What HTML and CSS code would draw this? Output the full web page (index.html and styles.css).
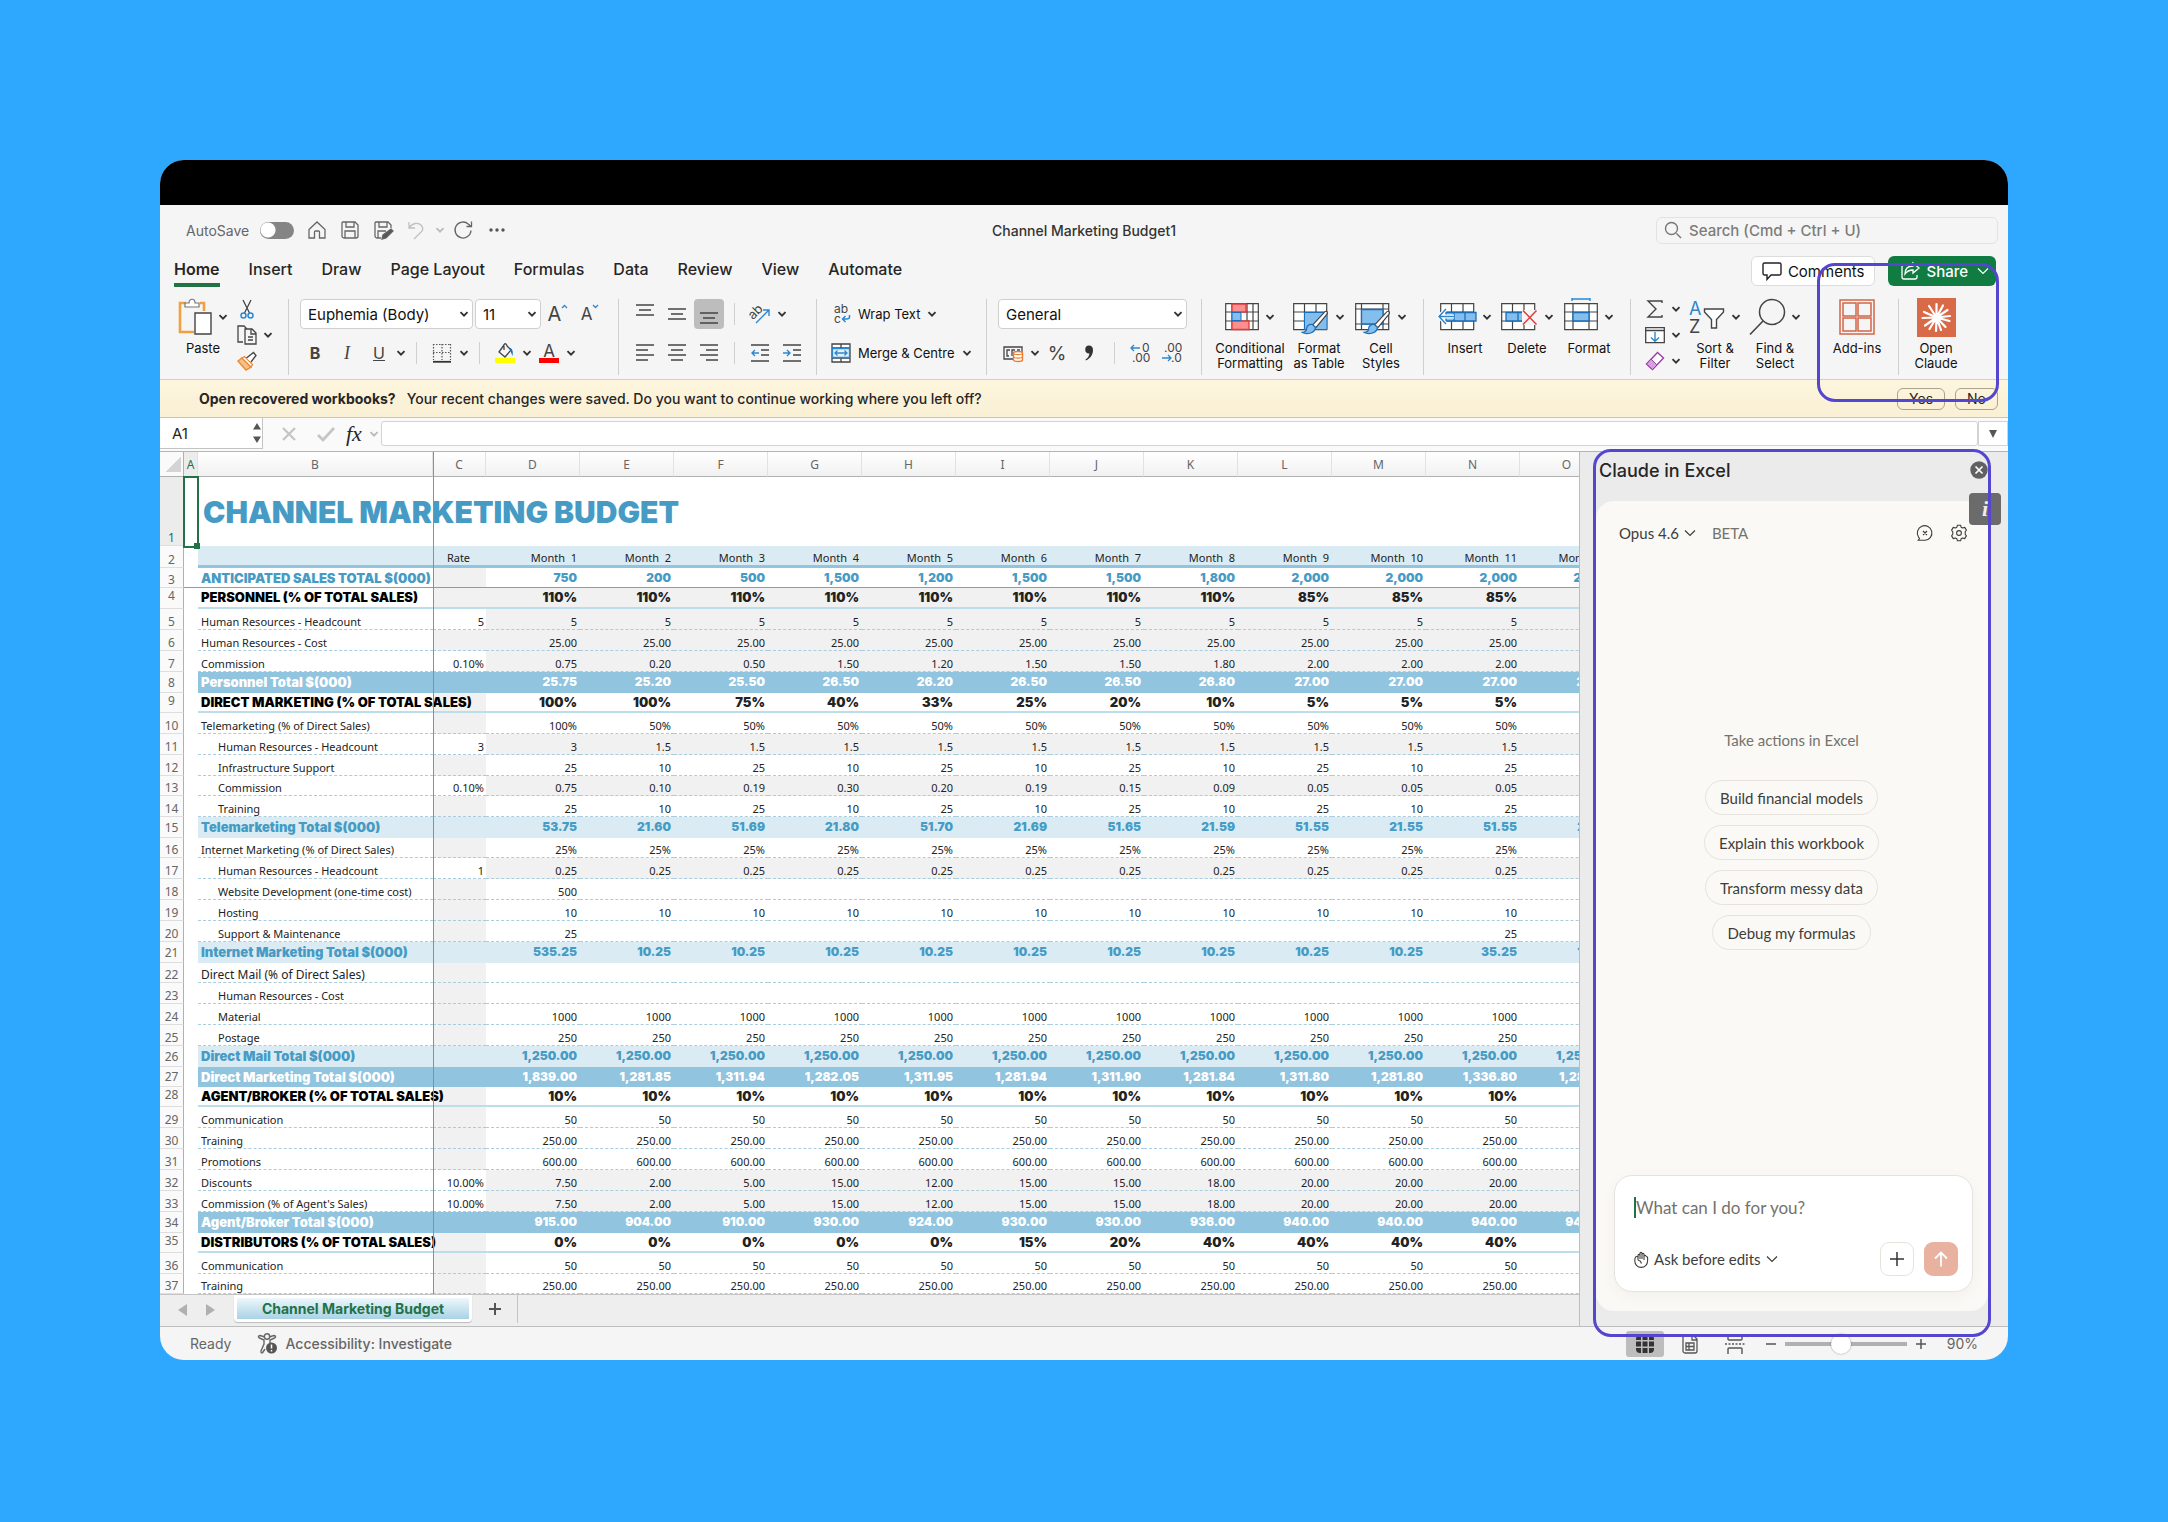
FILE: index.html
```html
<!DOCTYPE html>
<html lang="en">
<head>
<meta charset="utf-8">
<meta name="viewport" content="width=device-width, initial-scale=1">
<title>Channel Marketing Budget1</title>
<link rel="stylesheet" href="styles.css">
</head>
<body>
<svg class="defs" aria-hidden="true">
  <symbol id="chev" viewBox="0 0 10 10"><path d="M1.5 3.2 5 6.7l3.500-3.500" fill="none" stroke="currentColor" stroke-width="1.900"/></symbol>
  <symbol id="thin" viewBox="0 0 12 10"><path d="M1 2.500 6 7.500l5-5" fill="none" stroke="currentColor" stroke-width="1.200"/></symbol>
  <symbol id="brush" viewBox="0 0 30 28"><path d="M27.500 1.500c1.600.8.6 2.600 0 3.500L16 19l-3.500-3L24.500 3c.8-1 2-2 3-1.500z" fill="#fff" stroke="#444" stroke-width="1.300"/><path d="M12 15.500c-4-.5-6 2-6 4.500s-2 4-5 4c4 2.500 13.500 2 14.500-5z" fill="#83beec" stroke="#1b6fb8" stroke-width="1.300"/></symbol>
</svg>
<main class="window">
  <div class="blackbar"></div>

  <header class="titlebar">
    <div class="quick">
      <label class="autosave">AutoSave <input type="checkbox" class="switch"></label>
      <button class="ico" aria-label="Home"><svg width="20" height="20" viewBox="0 0 20 20"><path d="M2 9.500 10 2l8 7.500V18h-5.500v-6a1 1 0 0 0-1-1h-3a1 1 0 0 0-1 1v6H2z"/></svg></button>
      <button class="ico" aria-label="Save"><svg width="20" height="20" viewBox="0 0 20 20"><path d="M3 2h12l3 3v11a2 2 0 0 1-2 2H4a2 2 0 0 1-2-2V3a1 1 0 0 1 1-1zM6 2v5h8V2M5 18v-7h10v7"/></svg></button>
      <button class="ico" aria-label="Save a copy"><svg width="20" height="20" viewBox="0 0 20 20"><path d="M8 18H4a2 2 0 0 1-2-2V3a1 1 0 0 1 1-1h12l3 3v3M6 2v5h8V2M5 18v-7h8"/><path d="m9 19 1-4 8-6 2 2-7 7z" fill="#555"/></svg></button>
      <button class="ico dim" aria-label="Undo"><svg width="20" height="20" viewBox="0 0 20 20"><path d="M3 2v6h6M3 8c3-5 9-6 12-3s2 6-1 8l-6 6"/></svg></button>
      <svg class="chev dim" width="10" height="10"><use href="#chev"/></svg>
      <button class="ico" aria-label="Redo"><svg width="20" height="20" viewBox="0 0 20 20"><path d="M17 10.500a8 8 0 1 1-2.500-6.300L17 6.500M17.500 1.500v5h-5"/></svg></button>
      <button class="ico" aria-label="More"><svg width="20" height="20" viewBox="0 0 20 20"><g fill="#555" stroke="none"><circle cx="4" cy="10" r="1.700"/><circle cx="10" cy="10" r="1.700"/><circle cx="16" cy="10" r="1.700"/></g></svg></button>
    </div>
    <h1 class="doc">Channel Marketing Budget1</h1>
    <label class="search"><svg width="18" height="18" viewBox="0 0 18 18"><path d="M12.500 12.500 17 17" /><circle cx="7.500" cy="7.500" r="6"/></svg><input type="search" aria-label="Search" placeholder="Search (Cmd + Ctrl + U)"></label>
  </header>

  <div class="tabrow">
    <nav class="tabs">
      <a href="#home" class="active">Home</a><a href="#insert">Insert</a><a href="#draw">Draw</a><a href="#layout">Page Layout</a><a href="#formulas">Formulas</a><a href="#data">Data</a><a href="#review">Review</a><a href="#view">View</a><a href="#automate">Automate</a>
    </nav>
    <button class="comments"><svg width="20" height="20" viewBox="0 0 20 20"><path d="M2.500 2h15a1.500 1.500 0 0 1 1.500 1.500v9a1.500 1.500 0 0 1-1.500 1.500H9l-4 4.500V14H2.500A1.500 1.500 0 0 1 1 12.500v-9A1.500 1.500 0 0 1 2.500 2z" fill="none" stroke="#222" stroke-width="1.400"/></svg>Comments</button>
    <button class="share"><svg width="20" height="20" viewBox="0 0 20 20"><path d="M9 4H4a2 2 0 0 0-2 2v10a2 2 0 0 0 2 2h11a2 2 0 0 0 2-2v-2M13 2l6 5-6 5V9c-4 0-6 1-8 4 0-5 3-8 8-8z" fill="none" stroke="#fff" stroke-width="1.300"/></svg>Share<svg width="12" height="10"><use href="#thin"/></svg></button>
  </div>

  <section class="ribbon">
    <div class="group g-clip">
      <button class="big"><span class="pic"><svg width="34" height="38" viewBox="0 0 34 38"><path d="M8 5H2v29h14M22 5h4v8" fill="none" stroke="#f0a040" stroke-width="2.600"/><path d="M7 9V5h4c0-5 6-5 6 0h4v4z" fill="#fff" stroke="#777" stroke-width="1.200"/><path d="M17 15h16v21H17z" fill="#fff" stroke="#444" stroke-width="1.400"/></svg><svg class="chev" width="10" height="10"><use href="#chev"/></svg></span>Paste</button>
      <div class="mini">
        <div><button class="sm" aria-label="Cut"><svg width="20" height="20" viewBox="0 0 20 20"><path d="M6 1l6.500 13M14 1 7.500 14" stroke="#444" stroke-width="1.300"/><g fill="none" stroke="#2b88d0" stroke-width="1.500"><circle cx="6.500" cy="16.500" r="2.500"/><circle cx="13.500" cy="16.500" r="2.500"/></g></svg></button></div>
        <div><button class="sm" aria-label="Copy"><svg width="20" height="20" viewBox="0 0 20 20"><path d="M6 17H1V1h6l3 3M8 4h7l4 4v11H8zM14 4v5h5M11 12h5M11 15h5" fill="none" stroke="#444" stroke-width="1.300"/></svg></button><svg class="chev" width="10" height="10"><use href="#chev"/></svg></div>
        <div><button class="sm" aria-label="Format painter"><svg width="20" height="20" viewBox="0 0 20 20"><path d="m1 10 8 9 5-3-9-9z" fill="#f7c08a" stroke="#ec8a33" stroke-width="1.400"/><path d="m5 7 2.500-1.500 8 8L14 16z" fill="#fff" stroke="#ec8a33" stroke-width="1.300"/><path d="m9.500 7 7-5.500 2.500 3-5 6.500" fill="#fff" stroke="#444" stroke-width="1.300"/></svg></button></div>
      </div>
    </div>

    <div class="group g-font">
      <div class="row">
        <span class="sel font"><select aria-label="Font"><option>Euphemia (Body)</option></select><svg class="chev" width="10" height="10"><use href="#chev"/></svg></span>
        <span class="sel size"><select aria-label="Font size"><option>11</option></select><svg class="chev" width="10" height="10"><use href="#chev"/></svg></span>
        <button class="tool" aria-label="Grow font"><span class="bigA">A</span><svg class="up" width="7" height="14" viewBox="0 0 7 14"><path d="m1 4 2.500-2.500L6 4" fill="none" stroke="#2b88d0" stroke-width="1.300"/></svg></button>
        <button class="tool" aria-label="Shrink font"><span class="smA">A</span><svg class="up" width="7" height="14" viewBox="0 0 7 14"><path d="m1 1 2.500 2.500L6 1" fill="none" stroke="#2b88d0" stroke-width="1.300"/></svg></button>
      </div>
      <div class="row">
        <button class="tool b">B</button><button class="tool i">I</button><button class="tool u">U</button><svg class="chev" width="10" height="10"><use href="#chev"/></svg>
        <i class="sep"></i>
        <button class="tool" aria-label="Borders"><svg width="20" height="20" viewBox="0 0 20 20"><path d="M1.500 1v16M18.500 1v16M1 1.500h18M10 1v16M1 9.500h18" stroke="#555" stroke-width="1.200" stroke-dasharray="1.500 1.500"/><path d="M1 18.800h18" stroke="#333" stroke-width="1.800"/></svg></button><svg class="chev" width="10" height="10"><use href="#chev"/></svg>
        <i class="sep"></i>
        <button class="tool" aria-label="Fill colour"><svg width="20" height="20" viewBox="0 0 20 20"><path d="m9 2-5 7 6 5 6-7-4-4c-1-4-4-2-3 1v3" fill="none" stroke="#444" stroke-width="1.300"/><path d="M15 5c3 1 3 4 2.500 8L15 7z" fill="#1b6fb8"/><path d="M0 15h20v5H0z" fill="#ff0"/></svg></button><svg class="chev" width="10" height="10"><use href="#chev"/></svg>
        <button class="tool fc" aria-label="Font colour"><span>A</span></button><svg class="chev" width="10" height="10"><use href="#chev"/></svg>
      </div>
    </div>

    <div class="group g-align">
      <div class="row">
        <button class="tool" aria-label="Top align"><svg width="18" height="20" viewBox="0 0 18 20"><path d="M0 1h18M3 6h12M0 11h18"/></svg></button>
        <button class="tool" aria-label="Middle align"><svg width="18" height="20" viewBox="0 0 18 20"><path d="M0 5h18M3 10h12M0 15h18"/></svg></button>
        <button class="tool on" aria-label="Bottom align"><svg width="18" height="20" viewBox="0 0 18 20"><path d="M0 9h18M3 14h12M0 19h18"/></svg></button>
        <i class="sep"></i>
        <button class="tool" aria-label="Orientation"><svg width="20" height="20" viewBox="0 0 20 20"><text x="-1" y="13" transform="rotate(-45 5 10)" font-size="13" fill="#444" stroke="none">ab</text><path d="m6 19 13-13M13 6h6v6" fill="none" class="blue"/></svg></button><svg class="chev" width="10" height="10"><use href="#chev"/></svg>
      </div>
      <div class="row">
        <button class="tool" aria-label="Align left"><svg width="18" height="20" viewBox="0 0 18 20"><path d="M0 2h18M0 7h12M0 12h18M0 17h12"/></svg></button>
        <button class="tool" aria-label="Centre"><svg width="18" height="20" viewBox="0 0 18 20"><path d="M0 2h18M3 7h12M0 12h18M3 17h12"/></svg></button>
        <button class="tool" aria-label="Align right"><svg width="18" height="20" viewBox="0 0 18 20"><path d="M0 2h18M6 7h12M0 12h18M6 17h12"/></svg></button>
        <i class="sep"></i>
        <button class="tool" aria-label="Decrease indent"><svg width="18" height="20" viewBox="0 0 18 20"><path d="M0 2h18M10 7h8M10 12h8M0 18h18"/><path d="M8 10H1M4 7l-3 3 3 3" fill="none" class="blue"/></svg></button>
        <button class="tool" aria-label="Increase indent"><svg width="18" height="20" viewBox="0 0 18 20"><path d="M0 2h18M10 7h8M10 12h8M0 18h18"/><path d="M0 10h7M4 7l3 3-3 3" fill="none" class="blue"/></svg></button>
      </div>
    </div>

    <div class="group g-wrap">
      <div class="row"><button class="txt"><svg width="20" height="20" viewBox="0 0 20 20"><text x="3" y="9" font-size="12" fill="#444">ab</text><text x="3" y="19" font-size="12" fill="#444">c</text><path d="M18.500 11v2c0 2-2 2-3 2H12M14.500 12l-3 3 3 3" fill="none" stroke="#2b88d0" stroke-width="1.500"/></svg>Wrap Text<svg class="chev" width="10" height="10"><use href="#chev"/></svg></button></div>
      <div class="row"><button class="txt"><svg width="20" height="20" viewBox="0 0 20 20"><path d="M1 1h18v18H1zM1 5h18M1 15h18M10 1v4M10 15v4" fill="#fff" stroke="#444" stroke-width="1.300"/><path d="M1.500 5.500h17v9h-17z" fill="#e4f1fb" stroke="#2b88d0" stroke-width="1.300"/><path d="M4 10h12M6.500 7.500 4 10l2.500 2.500M13.500 7.500 16 10l-2.500 2.500" fill="none" stroke="#2b88d0" stroke-width="1.300"/></svg>Merge &amp; Centre<svg class="chev" width="10" height="10"><use href="#chev"/></svg></button></div>
    </div>

    <div class="group g-num">
      <div class="row"><span class="sel num"><select aria-label="Number format"><option>General</option></select><svg class="chev" width="10" height="10"><use href="#chev"/></svg></span></div>
      <div class="row">
        <button class="tool" aria-label="Currency"><svg width="20" height="20" viewBox="0 0 20 20"><path d="M1 4h18v12H1zM7 7H4v6h2M12 7H9v6M14 7h3" fill="none" stroke="#444" stroke-width="1.300"/><path d="M10.500 10c0-2 9-2 9 0v7c0 2-9 2-9 0z" fill="#fff" stroke="#ec7c30" stroke-width="1.400"/><path d="M10.500 10.500c1 1.500 8 1.500 9 0M10.500 14c1 1.500 8 1.500 9 0" fill="none" stroke="#ec7c30" stroke-width="1.300"/></svg></button><svg class="chev" width="10" height="10"><use href="#chev"/></svg>
        <button class="tool pct">%</button>
        <button class="tool" aria-label="Comma style"><svg width="10" height="16" viewBox="0 0 10 16"><path d="M5 .500A4 4 0 1 0 5.500 8.500C5 11 4 13 1.500 14.500l.5 1C7 13 9 9 9 5c0-3-1.500-4.500-4-4.500z" fill="#333"/></svg></button>
        <i class="sep"></i>
        <button class="tool" aria-label="Increase decimal"><svg width="20" height="20" viewBox="0 0 20 20"><text x="12" y="9" font-size="12" fill="#444">0</text><text x="2" y="19" font-size="12" fill="#444">.00</text><path d="M10 5H1M4 2 1 5l3 3" fill="none" stroke="#2b88d0" stroke-width="1.300"/></svg></button>
        <button class="tool" aria-label="Decrease decimal"><svg width="20" height="20" viewBox="0 0 20 20"><text x="2" y="9" font-size="12" fill="#444">.00</text><text x="9" y="19" font-size="12" fill="#444">.0</text><path d="M0 15h9M6 12l3 3-3 3" fill="none" stroke="#2b88d0" stroke-width="1.300"/></svg></button>
      </div>
    </div>

    <div class="group g-style">
      <button class="big wide"><span class="pic"><svg width="34" height="38" viewBox="0 0 34 38"><path d="M.700 5.700h32.600v26H.700zM0 14h34M0 23h34M7 5v27M22 5v27M28 5v27" fill="#fff" stroke="#444" stroke-width="1.200"/><path d="M7 6h14v8H7zM7 23h17v8.500H7z" fill="#ff8f8f" stroke="#dd3b3b" stroke-width="1.300"/><path d="M7 14.500h9v8H7z" fill="#83beec" stroke="#1b6fb8"/></svg><svg class="chev" width="10" height="10"><use href="#chev"/></svg></span>Conditional<br>Formatting</button>
      <button class="big"><span class="pic"><svg width="36" height="38" viewBox="0 0 36 38"><path d="M.700 5.700h33v26h-33zM0 14h34M0 23h34M11.500 5v27M23 5v27" fill="#fff" stroke="#444" stroke-width="1.200"/><path d="M11.500 14.500H34v17H11.500z" fill="#83beec" stroke="#1b6fb8"/><use href="#brush" x="8" y="12" width="28" height="26"/></svg><svg class="chev" width="10" height="10"><use href="#chev"/></svg></span>Format<br>as Table</button>
      <button class="big"><span class="pic"><svg width="36" height="38" viewBox="0 0 36 38"><path d="M.700 5.700h33v26h-33zM0 11h34M0 26h34M6.500 5v27M28 5v27" fill="#fff" stroke="#444" stroke-width="1.200"/><path d="M6.500 11.500H28v14.500H6.500z" fill="#83beec" stroke="#1b6fb8" stroke-width="1.300"/><use href="#brush" x="8" y="12" width="28" height="26"/></svg><svg class="chev" width="10" height="10"><use href="#chev"/></svg></span>Cell<br>Styles</button>
    </div>

    <div class="group g-cells">
      <button class="big"><span class="pic"><svg width="38" height="38" viewBox="0 0 38 38"><path d="M2.700 5.700h33v26h-33zM2 14h34M2 23h34M13.500 5v27M25 5v27" fill="#fff" stroke="#444" stroke-width="1.200"/><path d="M8 14.500h30v8.500H8zM27 14v9M16 14v9" fill="#83beec" stroke="#1b6fb8" stroke-width="1.300"/><path d="M16 18.500H1M8 11l-7 7.500L8 26" fill="none" stroke="#fff" stroke-width="4"/><path d="M16 18.500H1M8 11l-7 7.500L8 26" fill="none" stroke="#2b88d0" stroke-width="1.500"/></svg><svg class="chev" width="10" height="10"><use href="#chev"/></svg></span>Insert</button>
      <button class="big"><span class="pic"><svg width="38" height="38" viewBox="0 0 38 38"><path d="M1.700 5.700h33v26h-33zM1 14h34M1 23h34M12.500 5v27M24 5v27" fill="#fff" stroke="#444" stroke-width="1.200"/><path d="M6 14.500h18l3 4-3 4.500H6zM18 14v9" fill="#83beec" stroke="#1b6fb8" stroke-width="1.300"/><path d="M22 12h15v15H22z" fill="#f5f5f5"/><path d="m23 12.500 13.500 14M36.500 12.500 23 26.500" stroke="#dd3b3b" stroke-width="1.500"/></svg><svg class="chev" width="10" height="10"><use href="#chev"/></svg></span>Delete</button>
      <button class="big"><span class="pic"><svg width="34" height="38" viewBox="0 0 34 38"><path d="M.700 5.700h32.600v26H.700zM0 14h34M0 23h34M9 5v27M25 5v27" fill="#fff" stroke="#444" stroke-width="1.200"/><path d="M9 14.500h16v8.500H9z" fill="#83beec" stroke="#1b6fb8" stroke-width="1.300"/><path d="M8 1h18M8 0v3M26 0v3" stroke="#2b88d0" stroke-width="1.400"/></svg><svg class="chev" width="10" height="10"><use href="#chev"/></svg></span>Format</button>
    </div>

    <div class="group g-edit">
      <div class="mini">
        <div><button class="sm" aria-label="AutoSum"><svg width="20" height="20" viewBox="0 0 20 20"><path d="M17 4V2H3l8 8-8 8h14v-2" fill="none" stroke="#444" stroke-width="1.400"/></svg></button><svg class="chev" width="10" height="10"><use href="#chev"/></svg></div>
        <div><button class="sm" aria-label="Fill"><svg width="20" height="20" viewBox="0 0 20 20"><path d="M.700 2.700h18.600v15H.700zM0 5.500h20" fill="#fff" stroke="#444" stroke-width="1.300"/><path d="M10 7v9M6 12.500l4 3.800 4-3.800" fill="none" stroke="#2b88d0" stroke-width="1.400"/></svg></button><svg class="chev" width="10" height="10"><use href="#chev"/></svg></div>
        <div><button class="sm" aria-label="Clear"><svg width="20" height="20" viewBox="0 0 20 20"><path d="M1.500 13 12.500 1.500l6 5.500L7.500 18.500z" fill="#fff" stroke="#9a3fa8" stroke-width="1.400"/><path d="m1.500 13 4.500-5 6 6-4.500 4.500z" fill="#d9a0e0" stroke="#9a3fa8"/></svg></button><svg class="chev" width="10" height="10"><use href="#chev"/></svg></div>
      </div>
      <button class="big"><span class="pic"><svg width="36" height="38" viewBox="0 0 36 38"><text x="0" y="17" font-size="18" fill="#2b88d0">A</text><text x="0" y="35" font-size="18" fill="#444">Z</text><path d="M15.500 11h19v3l-7 7.500V30h-5v-8.500l-7-7.500z" fill="#fff" stroke="#444" stroke-width="1.400"/></svg><svg class="chev" width="10" height="10"><use href="#chev"/></svg></span>Sort &amp;<br>Filter</button>
      <button class="big"><span class="pic"><svg width="36" height="38" viewBox="0 0 36 38"><circle cx="23" cy="14" r="12.500" fill="none" stroke="#444" stroke-width="1.500"/><path d="M14 23 1 36.500" stroke="#444" stroke-width="1.600"/></svg><svg class="chev" width="10" height="10"><use href="#chev"/></svg></span>Find &amp;<br>Select</button>
      <button class="big addins"><span class="pic"><svg width="36" height="38" viewBox="0 0 36 38"><g fill="none" stroke="#d4654a" stroke-width="1.500"><path d="M1 2h34v34H1z"/><path d="M4 5h13v13H4zM19 5h13v13H19zM4 20h13v13H4zM19 20h13v13H19z"/></g></svg></span>Add-ins</button>
    </div>

    <div class="group g-claude">
      <button class="big"><span class="pic"><svg width="39" height="39" viewBox="0 0 39 39"><path d="M0 0h39v39H0z" fill="#d96a47"/><path d="M19.500 19.500V6M19.500 19.500 26 7.500M19.500 19.500l11-7.500M19.500 19.500 33 18M19.500 19.500 32.500 23M19.500 19.500l9 9.500M19.500 19.500 24 32M19.500 19.500 19 33M19.500 19.500 12.500 31M19.500 19.500 8 27.500M19.500 19.500 5.500 20M19.500 19.500 7 14M19.500 19.500 12 8" stroke="#fff" stroke-width="2.200" stroke-linecap="round"/></svg></span>Open<br>Claude</button>
    </div>
  </section>

  <div class="notice">
    <p><strong>Open recovered workbooks?</strong>Your recent changes were saved. Do you want to continue working where you left off?</p>
    <button>Yes</button><button>No</button>
  </div>

  <div class="formula">
    <div class="namebox"><input type="text" aria-label="Name box" value="A1"><svg width="8" height="20" viewBox="0 0 8 20"><path d="M0 6.500 4 0l4 6.500zM0 13.500 4 20l4-6.500z" fill="#555"/></svg></div>
    <svg class="fx-x" width="16" height="16" viewBox="0 0 16 16"><path d="m2 2 12 12M14 2 2 14" stroke="#c6c6c6" stroke-width="2.400"/></svg>
    <svg class="fx-c" width="18" height="16" viewBox="0 0 18 16"><path d="m1 9 5 5L17 2" fill="none" stroke="#c6c6c6" stroke-width="2.800"/></svg>
    <span class="fx">fx</span>
    <svg class="chev dim" width="10" height="10"><use href="#chev"/></svg>
    <input class="fbox" type="text" aria-label="Formula bar">
    <button class="drop" aria-label="Expand formula bar"><svg width="10" height="8" viewBox="0 0 10 8"><path d="M1 0h8L5 8z" fill="#555"/></svg></button>
  </div>

  <div class="workspace">
    <div class="book">
      <div class="grid">
        <table class="sheet"><colgroup><col class="c-n"><col class="c-a"><col class="c-b"><col class="c-c"></colgroup><thead></thead><tbody></tbody></table>
        <span class="freeze"></span><span class="cursor"></span>
      </div>
      <div class="sheets">
        <button class="nav" aria-label="Previous sheet"><svg width="10" height="12" viewBox="0 0 10 12"><path d="M9 0v12L0 6z" fill="#b0b0b0"/></svg></button>
        <button class="nav" aria-label="Next sheet"><svg width="10" height="12" viewBox="0 0 10 12"><path d="M1 0v12l9-6z" fill="#b0b0b0"/></svg></button>
        <button class="sheettab"><span>Channel Marketing Budget</span></button>
        <button class="add" aria-label="Add sheet"><svg width="12" height="12" viewBox="0 0 12 12"><path d="M6 0v12M0 6h12" stroke="#555" stroke-width="2"/></svg></button>
      </div>
    </div>

    <aside class="pane">
      <div class="panehead"><h2>Claude in Excel</h2><button aria-label="Close pane"><svg width="18" height="18" viewBox="0 0 18 18"><circle cx="9" cy="9" r="8.700" fill="#616161"/><path d="m5.500 5.500 7 7M12.500 5.500l-7 7" stroke="#fff" stroke-width="1.700"/></svg></button></div>
      <div class="card">
        <div class="cardhead">
          <button class="model">Opus 4.6<svg width="12" height="10"><use href="#thin"/></svg></button><span class="beta">BETA</span>
          <button aria-label="New chat"><svg width="18" height="18" viewBox="0 0 18 18"><path d="M2.500 13A7.300 7.300 0 1 1 9 16.300H2.200L3.500 14.500zM7 7l4 4M11 7l-4 4" fill="none" stroke="#3d3d3a" stroke-width="1.100"/></svg></button>
          <button aria-label="Settings"><svg width="18" height="18" viewBox="0 0 18 18"><path d="M7.400 1.200h3.200l.5 2 1.500.8 2.100-.6 1.700 2.700-1.200 1.700v2.400l1.200 1.700-1.700 2.700-2.100-.6-1.500.8-.5 2H7.400l-.5-2-1.500-.8-2.100.6-1.700-2.700 1.200-1.700V7.800L1.600 6.100l1.700-2.700 2.100.6 1.500-.8z" fill="none" stroke="#3d3d3a" stroke-width="1.100" stroke-linejoin="round"/><circle cx="9" cy="9" r="2.400" fill="none" stroke="#3d3d3a" stroke-width="1.100"/></svg></button>
        </div>
        <div class="prompts">
          <p>Take actions in Excel</p>
          <button>Build financial models</button>
          <button>Explain this workbook</button>
          <button>Transform messy data</button>
          <button>Debug my formulas</button>
        </div>
        <form class="chat">
          <div class="ask"><i class="caret"></i><input type="text" aria-label="Message" placeholder="What can I do for you?"></div>
          <div class="chatrow">
            <button type="button" class="mode"><svg width="15" height="17" viewBox="0 0 15 17"><path d="M4 9V4.500c0-1.500 2-1.500 2 0V8 2.500c0-1.500 2-1.500 2 0V8 3.500c0-1.500 2-1.500 2 0V9 5.500c0-1.500 2-1.500 2 0M4 6C1.500 4.500.8 7 .8 10a6.300 6.300 0 0 0 12.800 0c0-3 .5-4.500-1.600-4.500M4 9c2 .5 3 1.500 3.500 3.500" fill="none" stroke="#3d3d3a" stroke-width="1.100"/></svg>Ask before edits<svg width="12" height="10"><use href="#thin"/></svg></button>
            <button type="button" class="plus" aria-label="Attach"><svg width="14" height="14" viewBox="0 0 14 14"><path d="M7 0v14M0 7h14" stroke="#333" stroke-width="1.500"/></svg></button>
            <button type="button" class="send" aria-label="Send"><svg width="14" height="16" viewBox="0 0 14 16"><path d="M7 15.500V1.500M1 7.500l6-6 6 6" fill="none" stroke="#fff" stroke-width="1.800"/></svg></button>
          </div>
        </form>
      </div>
      <button class="info" aria-label="Info">i</button>
    </aside>
  </div>

  <footer class="status">
    <span>Ready</span>
    <button class="acc"><svg width="20" height="21" viewBox="0 0 20 21"><g fill="none" stroke="#666" stroke-width="1.400"><circle cx="9" cy="3.500" r="2.700"/><path d="M7 4 2 2.500C0 2.500 0 4.500 1.500 5L6 7v4l-3 7c-.5 2 1 2.500 2 1l2-3M11 4l5-1.500c2 0 2 2 .5 2.500L12 7v3"/></g><circle cx="13.500" cy="15" r="5.500" fill="#555"/><path d="M13.500 11.500v4M13.500 17v1.500" stroke="#fff" stroke-width="1.500"/></svg>Accessibility: Investigate</button>
    <div class="views">
      <button class="view on" aria-label="Normal view"><svg width="18" height="18" viewBox="0 0 18 18"><path d="M0 4a4 4 0 0 1 4-4h1v5H0zM6.500 0h5v5h-5zM13 0h1a4 4 0 0 1 4 4v1h-5zM0 6.500h5v5H0zM6.500 6.500h5v5h-5zM13 6.500h5v5h-5zM0 13h5v5H4a4 4 0 0 1-4-4zM6.500 13h5v5h-5zM13 13h5v1a4 4 0 0 1-4 4h-1z" fill="#333"/></svg></button>
      <button class="view" aria-label="Page layout view"><svg width="16" height="20" viewBox="0 0 16 20"><path d="M1 3a2 2 0 0 1 2-2h8l4 4v12a2 2 0 0 1-2 2H3a2 2 0 0 1-2-2zM10 1v5h5M4 9h8v7H4zM4 12.500h8M7 9v7" fill="none" stroke="#555" stroke-width="1.300"/></svg></button>
      <button class="view" aria-label="Page break view"><svg width="20" height="20" viewBox="0 0 20 20"><path d="M3 0v5a1 1 0 0 0 1 1h12a1 1 0 0 0 1-1V0M3 20v-5a1 1 0 0 1 1-1h12a1 1 0 0 1 1 1v5" fill="none" stroke="#555" stroke-width="1.400"/><path d="M0 10h20" stroke="#555" stroke-width="1.400" stroke-dasharray="2 1.500"/></svg></button>
    </div>
    <div class="zoom">
      <button aria-label="Zoom out"><svg width="10" height="10" viewBox="0 0 10 10"><path d="M0 5h10" stroke="#555" stroke-width="1.500"/></svg></button>
      <input type="range" aria-label="Zoom" min="0" max="100" value="45">
      <button aria-label="Zoom in"><svg width="10" height="10" viewBox="0 0 10 10"><path d="M0 5h10M5 0v10" stroke="#555" stroke-width="1.500"/></svg></button>
      <span>90%</span>
    </div>
  </footer>

  <div class="frame ribbonframe"></div>
  <div class="frame paneframe"></div>
</main>
<script src="sheet.js"></script>
</body>
</html>
```
FILE: sheet.js
```js
// Each row: kind | label | rate | twelve monthly values (a single value repeats across all months)
const same = (v) => Array(11).fill(v).concat('');
const list = (s) => { const a = s.split(' '); while (a.length < 12) a.push(''); return a; };
const none = Array(12).fill('');
const alt = ['25', ...'10 25 10 25 10 25 10 25 10 25'.split(' '), ''];
const rows = [
  ['title', 'CHANNEL MARKETING BUDGET', '', none],
  ['months', '', 'Rate', Array.from({ length: 12 }, (_, i) => 'Month\u00a0 ' + (i + 1))],
  ['sales', 'ANTICIPATED SALES TOTAL $(000)', '', list('750 200 500 1,500 1,200 1,500 1,500 1,800 2,000 2,000 2,000 2,000')],
  ['section shade', 'PERSONNEL (% OF TOTAL SALES)', '', list('110% 110% 110% 110% 110% 110% 110% 110% 85% 85% 85%')],
  ['item shade', 'Human Resources - Headcount', '5', same('5')],
  ['item shade', 'Human Resources - Cost', '', same('25.00')],
  ['item shade', 'Commission', '0.10%', list('0.75 0.20 0.50 1.50 1.20 1.50 1.50 1.80 2.00 2.00 2.00')],
  ['total', 'Personnel Total $(000)', '', list('25.75 25.20 25.50 26.50 26.20 26.50 26.50 26.80 27.00 27.00 27.00 27.00')],
  ['section short', 'DIRECT MARKETING (% OF TOTAL SALES)', '', list('100% 100% 75% 40% 33% 25% 20% 10% 5% 5% 5%')],
  ['item', 'Telemarketing (% of Direct Sales)', '', ['100%', ...same('50%').slice(1)]],
  ['item sub shade', 'Human Resources - Headcount', '3', ['3', ...same('1.5').slice(1)]],
  ['item sub', 'Infrastructure Support', '', alt],
  ['item sub shade short', 'Commission', '0.10%', list('0.75 0.10 0.19 0.30 0.20 0.19 0.15 0.09 0.05 0.05 0.05')],
  ['item sub', 'Training', '', alt],
  ['subtotal', 'Telemarketing Total $(000)', '', list('53.75 21.60 51.69 21.80 51.70 21.69 51.65 21.59 51.55 21.55 51.55 21.55')],
  ['item short', 'Internet Marketing (% of Direct Sales)', '', same('25%')],
  ['item sub shade', 'Human Resources - Headcount', '1', same('0.25')],
  ['item sub', 'Website Development (one-time cost)', '', ['500', ...none.slice(1)]],
  ['item sub', 'Hosting', '', same('10')],
  ['item sub', 'Support & Maintenance', '', ['25', ...Array(9).fill(''), '25', '']],
  ['subtotal', 'Internet Marketing Total $(000)', '', list('535.25 10.25 10.25 10.25 10.25 10.25 10.25 10.25 10.25 10.25 35.25 10.25')],
  ['item large short', 'Direct Mail (% of Direct Sales)', '', none],
  ['item sub', 'Human Resources - Cost', '', none],
  ['item sub', 'Material', '', same('1000')],
  ['item sub', 'Postage', '', same('250')],
  ['subtotal', 'Direct Mail Total $(000)', '', Array(12).fill('1,250.00')],
  ['total short', 'Direct Marketing Total $(000)', '', list('1,839.00 1,281.85 1,311.94 1,282.05 1,311.95 1,281.94 1,311.90 1,281.84 1,311.80 1,281.80 1,336.80 1,281.80')],
  ['section short', 'AGENT/BROKER (% OF TOTAL SALES)', '', same('10%')],
  ['item', 'Communication', '', same('50')],
  ['item', 'Training', '', same('250.00')],
  ['item', 'Promotions', '', same('600.00')],
  ['item shade', 'Discounts', '10.00%', list('7.50 2.00 5.00 15.00 12.00 15.00 15.00 18.00 20.00 20.00 20.00')],
  ['item shade', "Commission (% of Agent's Sales)", '10.00%', list('7.50 2.00 5.00 15.00 12.00 15.00 15.00 18.00 20.00 20.00 20.00')],
  ['total', 'Agent/Broker Total $(000)', '', list('915.00 904.00 910.00 930.00 924.00 930.00 930.00 936.00 940.00 940.00 940.00 940.00')],
  ['section short', 'DISTRIBUTORS (% OF TOTAL SALES)', '', list('0% 0% 0% 0% 0% 15% 20% 40% 40% 40% 40%')],
  ['item', 'Communication', '', same('50')],
  ['item short', 'Training', '', same('250.00')],
];

const add = (parent, tag, text, cls) => {
  const el = document.createElement(tag);
  if (text) el.textContent = text;
  if (cls) el.className = cls;
  parent.append(el);
  return el;
};

const table = document.querySelector('.sheet');
for (let i = 0; i < 12; i++) add(table.querySelector('colgroup'), 'col', '', 'c-m');

const head = add(table.tHead, 'tr');
add(head, 'th', '', 'corner');
[...'ABCDEFGHIJKLMNO'].forEach((c) => add(head, 'th', c, c === 'A' ? 'picked' : ''));

rows.forEach(([kind, label, rate, values], i) => {
  const tr = add(table.tBodies[0], 'tr', '', kind);
  add(tr, 'th', String(i + 1), i ? 'n' : 'n picked');
  add(tr, 'td');
  add(tr, 'td', label, 'label');
  add(tr, 'td', rate, rate ? 'rate' : 'rate empty');
  values.forEach((v) => add(tr, 'td', v, 'v'));
});
```
FILE: styles.css
```css
* { box-sizing: border-box; }
body {
  margin: 0;
  padding: 160px;
  background: #2ea8ff;
  font-family: Inter, "Liberation Sans", sans-serif;
  font-size: 14px;
  color: #262626;
}
button, input, select { font: inherit; color: inherit; margin: 0; }
button { border: 0; padding: 0; background: none; }
h1, h2, p { margin: 0; }
svg { display: block; flex: none; overflow: visible; }
.defs { position: absolute; width: 0; height: 0; }
.window {
  position: relative;
  background: #f5f5f5;
  border-radius: 24px;
  overflow: hidden;
}
.blackbar { height: 45px; background: #000; }
.chev { color: #333; }
.dim { color: #bbb; }

/* title bar */
.titlebar {
  display: grid;
  grid-template-columns: 1fr auto 1fr;
  align-items: center;
  height: 50px;
  padding: 0 10px;
}
.quick { display: flex; align-items: center; gap: 13px; padding-left: 16px; }
.autosave { display: flex; align-items: center; gap: 11px; color: #666; }
.switch {
  appearance: none;
  width: 34px;
  height: 17px;
  margin: 0;
  border-radius: 9px;
  background: radial-gradient(circle at 8px 8px, #fff 7px, transparent 8px), #858585;
}
.ico svg { fill: none; stroke: #666; stroke-width: 1.3; }
.ico.dim svg { stroke: #c0c0c0; }
.quick .chev { margin: 0 -4px; color: #bbb; }
.doc { font-size: 14px; font-weight: 500; color: #333; }
.search {
  justify-self: end;
  display: flex;
  align-items: center;
  gap: 5px;
  width: 342px;
  height: 27px;
  padding-left: 7px;
  border: 1px solid #e2e2e2;
  border-radius: 6px;
}
.search svg { fill: none; stroke: #777; stroke-width: 1.4; }
.search input { flex: 1; min-width: 0; border: 0; background: none; font-size: 15px; font-weight: 500; outline: 0; }
.search input::placeholder { color: #7c7c7c; }

/* tabs */
.tabrow { display: flex; height: 40px; padding: 1px 12px 0 14px; align-items: flex-start; }
.tabs { display: flex; gap: 29px; margin-right: auto; }
.tabs a { color: #262626; text-decoration: none; font-size: 16px; font-weight: 500; line-height: 27px; }
.tabs .active { font-weight: 600; border-bottom: 4px solid #217346; }
.comments, .share { display: flex; align-items: center; height: 30px; border-radius: 6px; font-size: 15px; }
.comments { gap: 6px; padding: 0 10px; margin-right: 13px; background: #fff; border: 1px solid #dcdcdc; color: #111; }
.share { gap: 6px; padding: 0 7px 0 12px; background: #107c41; color: #fff; font-weight: 500; }
.share svg:last-child { margin-left: 3px; }

/* ribbon */
.ribbon { display: flex; padding: 4px 0; border-bottom: 1px solid #cfcfcf; color: #111; }
.group { height: 76px; border-right: 1px solid #cfcfcf; }
.row { display: flex; align-items: center; gap: 2px; height: 30px; }
.row + .row { margin-top: 9px; }
.tool { display: flex; align-items: center; justify-content: center; width: 30px; height: 30px; border-radius: 4px; color: #444; font-size: 16px; }
.tool svg { stroke-width: 1.4; }
.sep { width: 1px; height: 22px; margin: 0 8px; background: #cfcfcf; }
.g-clip { display: flex; width: 129px; padding-left: 12px; }
.g-font { width: 330px; padding-left: 11px; }
.g-align { width: 198px; padding-left: 11px; }
.g-align .tool svg { stroke: #444; }
.g-align .chev { stroke: none; }
.tool .blue { stroke: #2b88d0; }
.g-wrap { width: 170px; padding-left: 14px; }
.g-num { width: 215px; padding-left: 11px; }
.g-style { display: flex; width: 222px; padding-left: 10px; }
.g-cells { display: flex; width: 207px; padding-left: 10px; }
.g-edit { display: flex; width: 268px; padding-left: 14px; }
.g-claude { display: flex; padding-left: 6px; border: 0; }
.sel { display: grid; height: 30px; align-items: center; }
.sel > * { grid-area: 1 / 1; }
.sel select { appearance: none; width: 100%; height: 30px; padding: 0 7px; border: 1px solid #cfcfcf; border-radius: 4px; background: #fff; font-size: 15px; color: #111; }
.sel .chev { justify-self: end; margin-right: 4px; pointer-events: none; }
.font { width: 173px; }
.size { width: 66px; }
.num { width: 189px; }
.bigA { font-size: 20px; line-height: 20px; }
.smA { font-size: 17px; line-height: 20px; }
.up { align-self: flex-start; margin-top: 5px; }
.b { font-weight: 700; }
.i { font: italic 18px "Liberation Serif", serif; }
.u { text-decoration: underline; }
.fc span { width: 20px; height: 20px; border-bottom: 5px solid #f00; font-size: 17px; line-height: 16px; }
.on { background: #bdbdbd; }
.pct { font-size: 19px; }
.txt { display: flex; align-items: center; gap: 7px; font-size: 13px; color: #111; }
.mini { display: flex; flex-direction: column; gap: 6px; width: 40px; }
.mini div { display: flex; align-items: center; gap: 6px; height: 20px; }
.g-clip .mini { margin-left: 3px; }
.big { display: flex; flex-direction: column; align-items: center; width: 62px; font-size: 13px; line-height: 15px; white-space: nowrap; text-align: center; color: #111; }
.big.wide { width: 76px; }
.pic { display: flex; align-items: center; gap: 6px; height: 38px; margin: -1px 0 5px; }
.g-edit .big { width: 60px; }
.g-edit .addins { margin-left: 22px; }

/* recovery notice */
.notice { display: flex; align-items: center; gap: 10px; height: 38px; padding: 0 10px 0 39px; background: linear-gradient(#fdf5dd, #f9f0d5); border-bottom: 1px solid #c9c5b5; font-size: 14px; font-weight: 500; }
.notice p { margin-right: auto; }
.notice strong { font-weight: 700; margin-right: 11px; }
.notice button { height: 22px; padding: 0 11px; border: 1px solid #a9a490; border-radius: 6px; line-height: 20px; font-weight: 400; }

/* formula bar */
.formula { display: flex; align-items: center; height: 34px; padding-bottom: 2px; background: #fafafa; border-bottom: 1px solid #b5b5b5; }
.namebox { display: flex; align-items: center; width: 103px; height: 31px; padding: 0 1px 0 12px; background: #fff; border-right: 1px solid #c4c4c4; border-bottom: 1px solid #c4c4c4; }
.namebox input { flex: 1; min-width: 0; padding: 0; border: 0; background: none; font-size: 15px; }
.fx-x { margin-left: 18px; }
.fx-c { margin-left: 20px; }
.fx { width: 22px; margin: 0 1px 0 11px; font: italic 22px "Liberation Serif", serif; line-height: 24px; }
.fbox { flex: 1; min-width: 0; height: 25px; margin-left: 2px; border: 1px solid #d3d3d3; border-radius: 3px; background: #fff; }
.drop { display: flex; align-items: center; justify-content: center; width: 30px; height: 25px; background: #fff; border: 1px solid #d3d3d3; }

/* sheet */
.workspace { display: flex; }
.book { flex: 1; min-width: 0; display: flex; flex-direction: column; }
.grid { position: relative; overflow: hidden; background: #fff; }
.sheet { table-layout: fixed; width: 1454px; border-spacing: 0; font: 11px "Noto Sans", sans-serif; color: #222; }
.c-n { width: 24px; }
.c-a { width: 14px; }
.c-b { width: 235px; }
.c-c { width: 53px; }
.c-m { width: 94px; }
.sheet th, .sheet td { padding: 0; white-space: nowrap; }
thead th { height: 25px; border-right: 1px solid #e2e2e2; border-bottom: 1px solid #b0b0b0; background: linear-gradient(#fff, #f1f1f1); font-weight: 400; font-size: 12px; color: #666; }
thead .corner { border-right-color: #b0b0b0; background: linear-gradient(135deg, transparent 50%, #d4d4d4 51%) 5px 4px / 16px 16px no-repeat, #fafafa; }
.sheet .picked { background: #ececec; color: #217346; }
tbody tr { height: 21px; }
tbody .short { height: 20px; }
.sheet .n { border-right: 1px solid #b0b0b0; border-bottom: 1px solid #dedede; background: #fafafa; font-weight: 400; font-size: 12px; line-height: 15px; color: #666; text-align: center; vertical-align: bottom; }
.sheet .n.picked { background: #ececec; color: #217346; }
.sheet .label { padding-left: 3px; }
.sheet .v { padding-right: 3px; text-align: right; }
.sheet .rate { padding-right: 2px; text-align: right; }
.empty { background: #f1f1f1; }
.item td { vertical-align: bottom; line-height: 14px; }
.item .label, .item .rate, .item .v { border-bottom: 1px dashed #a9cddf; }
.sheet .sub .label { padding-left: 20px; }
.large .label { font-size: 12px; }
.shade .v { background: #f1f1f1; }
tbody .title { height: 69px; }
.title .label { font: 900 30px Inter, sans-serif; color: #469bc5; }
.title .empty { background: none; }
.sheet .title .label { padding-left: 5px; }
tbody .months { height: 22px; }
.months td { vertical-align: bottom; line-height: 14px; }
.months .label, .months .rate, .months .v { background: #daebf3; border-bottom: 3px solid #90c4df; }
.sheet .months .rate { text-align: center; }
tbody .sales { height: 20px; }
.sales td { border-bottom: 1px solid #999; line-height: 18px; }
.sales .label, .sales .v { font-family: Inter, sans-serif; font-weight: 900; font-size: 12px; color: #469bc5; }
.section td { vertical-align: top; line-height: 18px; }
.section .label, .section .v { font-family: Inter, sans-serif; font-weight: 900; font-size: 13px; color: #000; }
.section .v { color: #222; }
.section .label, .section .rate, .section .v { border-bottom: 2px solid #bcdeea; }
.sheet .section .n { vertical-align: top; }
.sheet .total .n, .sheet .subtotal .n { vertical-align: middle; }
.total td, .subtotal td { line-height: 20px; vertical-align: top; font-family: Inter, sans-serif; font-weight: 900; font-size: 12px; }
.total .label, .total .rate, .total .v { background: #90c4df; color: #fff; }
.subtotal .label, .subtotal .rate, .subtotal .v { background: #daebf3; color: #469bc5; }
.sales .label, .total .label, .subtotal .label { font-size: 13px; }
.freeze { position: absolute; top: 0; bottom: 0; left: 273px; width: 1px; background: #8f8f8f; }
.cursor { position: absolute; top: 24px; left: 23px; width: 16px; height: 72px; border: 2px solid #217346; }
.cursor::after { content: ""; position: absolute; right: -3px; bottom: -3px; width: 6px; height: 6px; background: #217346; }

/* sheet tabs */
.sheets { display: flex; align-items: flex-start; flex: 1; min-height: 32px; padding-left: 18px; background: #eee; border-top: 1px solid #c4c4c4; }
.nav { width: 10px; height: 30px; margin-right: 17px; }
.sheettab { height: 27px; margin-left: 2px; padding: 3px; background: #fff; border-radius: 0 0 4px 4px; box-shadow: 0 1px 1px #bbb; }
.sheettab span { display: block; width: 232px; height: 21px; background: linear-gradient(#eef7fb, #a9d2e6); font-size: 14px; font-weight: 700; line-height: 22px; color: #217346; }
.add { display: flex; align-items: center; justify-content: center; width: 46px; height: 28px; border-right: 1px solid #c4c4c4; }

/* Claude pane */
.pane { position: relative; display: flex; flex-direction: column; width: 429px; padding: 0 20px 15px 16px; background: #ebebeb; border-left: 1px solid #bdbdbd; font-family: Lato, "Liberation Sans", sans-serif; }
.panehead { display: flex; align-items: center; justify-content: space-between; height: 49px; padding: 0 0 13px 3px; }
.panehead h2 { font: 500 18px Inter, sans-serif; }
.card { flex: 1; display: flex; flex-direction: column; padding: 22px 15px 19px 18px; background: #faf9f6; border-radius: 18px; color: #3d3d3a; }
.cardhead { display: flex; align-items: center; gap: 16px; height: 20px; padding: 0 5px; font-size: 15px; }
.model { display: flex; align-items: center; gap: 5px; }
.beta { margin-right: auto; color: #73726c; }
.prompts { display: flex; flex: 1; flex-direction: column; align-items: center; justify-content: center; gap: 10px; padding: 0 4px 38px 0; }
.prompts p { margin-bottom: 20px; font-size: 15px; line-height: 20px; color: #73726c; }
.prompts button { height: 35px; padding: 0 14px; border: 1px solid #e5e3dc; border-radius: 18px; font-size: 15px; }
.chat { height: 117px; padding: 20px 14px 14px 19px; background: #fff; border: 1px solid #e5e3dc; border-radius: 18px; box-shadow: 0 4px 16px #0000000a; }
.ask { display: flex; align-items: center; height: 22px; margin-bottom: 24px; }
.caret { width: 2px; height: 21px; background: #217346; }
.ask input { flex: 1; min-width: 0; padding: 0; border: 0; background: none; font-size: 17px; outline: 0; }
.ask input::placeholder { color: #73726c; }
.chatrow { display: flex; align-items: center; gap: 10px; height: 34px; }
.mode { display: flex; align-items: center; gap: 5px; margin-right: auto; font-size: 15px; }
.plus, .send { display: flex; align-items: center; justify-content: center; width: 34px; height: 34px; border-radius: 9px; }
.plus { border: 1px solid #e5e3dc; }
.send { background: #e8b1a0; }
.info { position: absolute; top: 41px; right: 7px; width: 32px; height: 32px; border-radius: 4px; background: #6b6b6b; color: #eee; font: italic 700 22px "Liberation Serif", serif; }

/* status bar */
.status { display: flex; align-items: center; height: 34px; padding: 0 30px; border-top: 1px solid #bdbdbd; font-size: 14px; color: #666; }
.acc { display: flex; align-items: center; gap: 7px; margin-left: 27px; font-weight: 500; }
.views { display: flex; gap: 7px; margin-left: auto; margin-right: 12px; }
.view { display: flex; align-items: center; justify-content: center; width: 38px; height: 26px; border-radius: 3px; }
.zoom { display: flex; align-items: center; gap: 9px; }
.zoom input { appearance: none; width: 122px; height: 20px; background: linear-gradient(#b0b0b0, #b0b0b0) center / 100% 4px no-repeat; }
.zoom input::-webkit-slider-thumb { appearance: none; width: 20px; height: 20px; border-radius: 50%; background: #fff; box-shadow: 0 0 2px #0006; }
.zoom span { margin-left: 12px; }

/* highlight frames drawn over the window */
.frame { position: absolute; border: 3px solid #5546cf; border-radius: 18px; pointer-events: none; }
.ribbonframe { top: 103px; right: 9px; width: 182px; height: 139px; }
.paneframe { top: 289px; right: 17px; bottom: 23px; width: 398px; }
```
